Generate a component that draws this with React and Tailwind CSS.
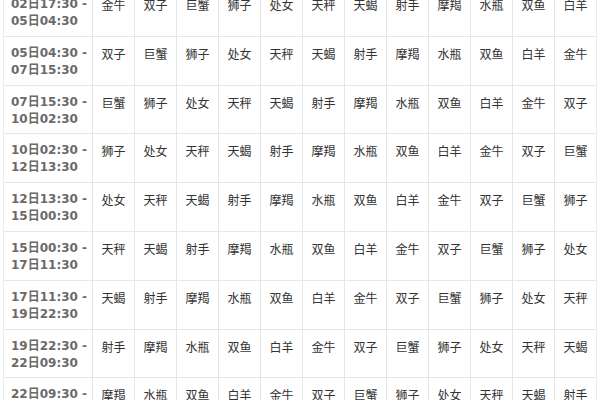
import React from "react";

const signs = ["白羊", "金牛", "双子", "巨蟹", "狮子", "处女", "天秤", "天蝎", "射手", "摩羯", "水瓶", "双鱼"];

const rows = [
  ["02日17:30 -", "05日04:30", 1],
  ["05日04:30 -", "07日15:30", 2],
  ["07日15:30 -", "10日02:30", 3],
  ["10日02:30 -", "12日13:30", 4],
  ["12日13:30 -", "15日00:30", 5],
  ["15日00:30 -", "17日11:30", 6],
  ["17日11:30 -", "19日22:30", 7],
  ["19日22:30 -", "22日09:30", 8],
  ["22日09:30 -", "24日20:30", 9],
];

export default function App() {
  return (
    <div className="w-[600px] h-[400px] overflow-hidden bg-white">
      <div className="mt-[-12px] ml-[3px] w-[594px] border-l border-r border-[#ececec]">
        {rows.map(([a, b, start], i) => (
          <div
            key={i}
            className="grid grid-cols-[88px_repeat(12,minmax(0,1fr))] h-[48.8px] border-b border-[#e6e6e6]"
          >
            <div
              className="pl-[7px] pt-[8px] text-[12px] leading-[17px] font-bold text-[#6a6a6a] whitespace-nowrap"
              style={{ fontFamily: '"DejaVu Sans", "Noto Sans CJK SC", sans-serif' }}
            >
              <div>{a}</div>
              <div>{b}</div>
            </div>
            {Array.from({ length: 12 }).map((_, j) => (
              <div
                key={j}
                className="border-l border-[#e6e6e6] pt-[8px] text-center text-[12px] leading-[17px] text-[#333]"
                style={{ fontFamily: '"Noto Sans CJK SC", sans-serif' }}
              >
                {signs[(start + j) % 12]}
              </div>
            ))}
          </div>
        ))}
      </div>
    </div>
  );
}
